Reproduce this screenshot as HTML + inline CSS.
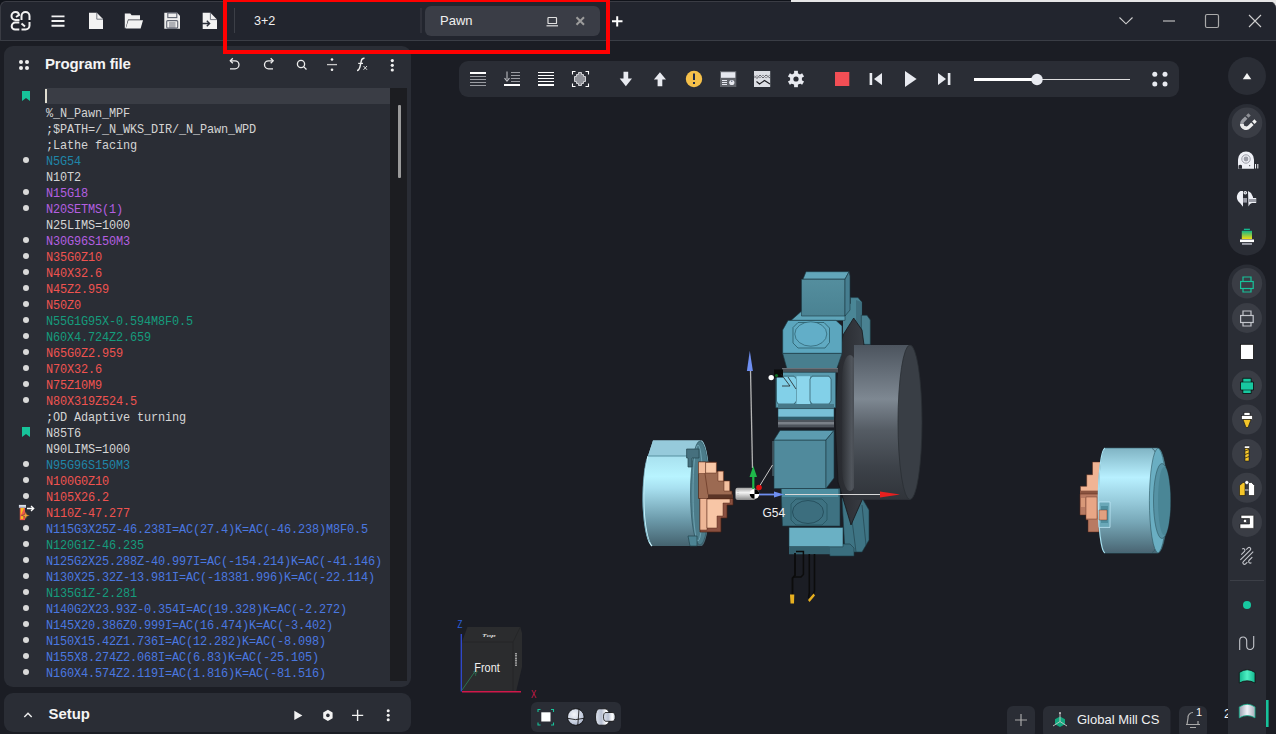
<!DOCTYPE html>
<html><head><meta charset="utf-8">
<style>
*{box-sizing:border-box;margin:0;padding:0}
html,body{width:1276px;height:734px;overflow:hidden;background:#1b1d24;font-family:"Liberation Sans",sans-serif;color:#fff}
.a{position:absolute}
#topstrip{left:0;top:0;width:1276px;height:8px;background:#10131a}
#topwhite{left:791px;top:0;width:485px;height:2px;background:#e6e6e6}
#topbar{left:0;top:1px;width:1276px;height:40px;background:#22252e;border-bottom:1px solid #3a3d45;border-top:1px solid #3a3c44;border-left:1px solid #3a3c44;border-radius:6px 7px 0 0}
.sep{width:1px;background:#3c3f47}
#panel{left:4px;top:46px;width:407px;height:641px;background:#2a2d35;border-radius:9px}
#setup{left:4px;top:693px;width:407px;height:39px;background:#2a2d35;border-radius:9px}
.code{font-family:"Liberation Mono",monospace;font-size:11.88px;letter-spacing:-0.128px;line-height:16px;white-space:pre}
.ln{position:absolute;left:46px;height:16px;transform:translateY(1.5px)}
.dot{position:absolute;left:23px;width:6px;height:6px;border-radius:50%;background:#d9d9d9}
.w{color:#d4d4d4}.b{color:#1f86a8}.p{color:#b45fe0}.r{color:#ef5350}.g{color:#159c7c}.bl{color:#4a78e0}
#vtool{left:459px;top:61px;width:720px;height:36px;background:#2a2d35;border-radius:9px}
</style></head><body>
<div class="a" id="topstrip"></div>
<div class="a" style="left:1266px;top:0;width:10px;height:10px;background:#e6e6e6"></div>
<div class="a" id="topbar"></div>
<div class="a" id="topwhite"></div>
<svg class="a" style="left:0;top:0" width="1276" height="41" viewBox="0 0 1276 41">
<g fill="none" stroke="#f2f2f2" stroke-width="2" stroke-linecap="butt">
 <!-- logo -->
 <path d="M19.5 20H15.5A4 4 0 0 1 15.5 12H15.8A3.5 3.5 0 0 1 19 15L16 17"/>
 <path d="M21.5 20V16A4 4 0 0 1 29.5 16V20"/>
 <path d="M19.3 22.6H15.3A3.6 3.6 0 0 0 11.7 26.2A3.4 3.4 0 0 0 15.1 29.6H19.3"/>
 <path d="M21.5 29.5H25.5A4 4 0 0 0 29.5 25.5V22"/>
 <path d="M21.5 23.5L25 26.5"/>
 <!-- hamburger -->
 <path d="M51.5 16.4H64.5M51.5 21H64.5M51.5 25.8H64.5" stroke-width="1.9"/>
</g>
<!-- new file -->
<path d="M89 12.8H96.8L103 19V29H89Z" fill="#f2f2f2"/>
<path d="M96.8 12.8V19.2H103" fill="none" stroke="#6a6e78" stroke-width="0.9"/>
<!-- open folder -->
<path d="M124.8 13.6H130.3L131.6 15.3H140V19.5H128L125.6 28.3H124.8Z" fill="#f2f2f2"/>
<path d="M128.4 20.2H143L140.6 28.4H125.8Z" fill="#f2f2f2"/>
<!-- save -->
<path d="M164.3 12.8H177L180 15.8V28.7H164.3Z" fill="#eeeeee"/>
<rect x="167.8" y="13" width="9" height="4.6" fill="none" stroke="#5e6370" stroke-width="1.1"/>
<rect x="166.7" y="20.6" width="11" height="7.5" rx="1" fill="#eeeeee" stroke="#5e6370" stroke-width="1.1"/>
<path d="M169 23H175.5M169 25H175.5M169 27H175.5" stroke="#5e6370" stroke-width="0.9"/>
<!-- export -->
<path d="M202.7 12.8H210.4L217 19.4V29H202.7Z" fill="#f2f2f2"/>
<path d="M210.4 12.8V19.6H217" fill="none" stroke="#6a6e78" stroke-width="0.9"/>
<path d="M202 23.5H209.5M206.8 20.8L209.6 23.5L206.8 26.2" fill="none" stroke="#2b2f3a" stroke-width="1.4"/>
<!-- separators -->
<rect x="234" y="8" width="1" height="25" fill="#3c3f47"/>
<rect x="420.5" y="8" width="1" height="25" fill="#3c3f47"/>
<!-- tab -->
<rect x="425" y="6" width="175" height="30" rx="6" fill="#3a3d46"/>
<g fill="none" stroke="#e0e0e0" stroke-width="1.2">
 <rect x="548" y="17.5" width="8.5" height="6" rx="0.6"/>
 <path d="M546.5 25.8H558"/>
</g>
<path d="M576.5 17.3L584 24.8M584 17.3L576.5 24.8" stroke="#9c9c9c" stroke-width="2"/>
<path d="M612 21.3H622.5M617.2 16.2V26.4" stroke="#ffffff" stroke-width="2"/>
<!-- window controls -->
<g fill="none" stroke="#cfcfcf" stroke-width="1.1">
 <path d="M1119.5 17.5L1126 23.8L1132.5 17.5"/>
 <path d="M1163 21H1175" stroke="#bdbdbd" stroke-width="1.2"/>
 <rect x="1205.5" y="14.5" width="13" height="13" rx="1.5" stroke="#aaaaaa" stroke-width="1.2"/>
 <path d="M1249 15L1261 27M1261 15L1249 27" stroke-width="1.1"/>
</g>
</svg>
<div class="a" style="left:254px;top:13.5px;font-size:12.6px;line-height:15px;color:#f0f0f0">3+2</div>
<div class="a" style="left:440px;top:13px;font-size:13px;line-height:15px;color:#f0f0f0">Pawn</div>


<!-- left panel -->
<div class="a" id="panel"></div>
<div class="a" id="setup"></div>
<div class="a" style="left:45px;top:88px;width:345px;height:16px;background:#3a3d45"></div>
<div class="a" style="left:45px;top:89px;width:2px;height:14px;background:#e0ddd0"></div>
<svg class="a" style="left:22px;top:91px" width="8" height="10" viewBox="0 0 8 10"><path d="M0 0H8V10L4 7L0 10Z" fill="#17c49a"/></svg>
<div class="ln code w" style="top:104px">%_N_Pawn_MPF</div>
<div class="ln code w" style="top:120px">;$PATH=/_N_WKS_DIR/_N_Pawn_WPD</div>
<div class="ln code w" style="top:136px">;Lathe facing</div>
<div class="dot" style="top:157px"></div>
<div class="ln code b" style="top:152px">N5G54</div>
<div class="ln code w" style="top:168px">N10T2</div>
<div class="dot" style="top:189px"></div>
<div class="ln code p" style="top:184px">N15G18</div>
<div class="dot" style="top:205px"></div>
<div class="ln code p" style="top:200px">N20SETMS(1)</div>
<div class="ln code w" style="top:216px">N25LIMS=1000</div>
<div class="dot" style="top:237px"></div>
<div class="ln code p" style="top:232px">N30G96S150M3</div>
<div class="dot" style="top:253px"></div>
<div class="ln code r" style="top:248px">N35G0Z10</div>
<div class="dot" style="top:269px"></div>
<div class="ln code r" style="top:264px">N40X32.6</div>
<div class="dot" style="top:285px"></div>
<div class="ln code r" style="top:280px">N45Z2.959</div>
<div class="dot" style="top:301px"></div>
<div class="ln code r" style="top:296px">N50Z0</div>
<div class="dot" style="top:317px"></div>
<div class="ln code g" style="top:312px">N55G1G95X-0.594M8F0.5</div>
<div class="dot" style="top:333px"></div>
<div class="ln code g" style="top:328px">N60X4.724Z2.659</div>
<div class="dot" style="top:349px"></div>
<div class="ln code r" style="top:344px">N65G0Z2.959</div>
<div class="dot" style="top:365px"></div>
<div class="ln code r" style="top:360px">N70X32.6</div>
<div class="dot" style="top:381px"></div>
<div class="ln code r" style="top:376px">N75Z10M9</div>
<div class="dot" style="top:397px"></div>
<div class="ln code r" style="top:392px">N80X319Z524.5</div>
<div class="ln code w" style="top:408px">;OD Adaptive turning</div>
<svg class="a" style="left:22px;top:427px" width="8" height="10" viewBox="0 0 8 10"><path d="M0 0H8V10L4 7L0 10Z" fill="#17c49a"/></svg>
<div class="ln code w" style="top:424px">N85T6</div>
<div class="ln code w" style="top:440px">N90LIMS=1000</div>
<div class="dot" style="top:461px"></div>
<div class="ln code b" style="top:456px">N95G96S150M3</div>
<div class="dot" style="top:477px"></div>
<div class="ln code r" style="top:472px">N100G0Z10</div>
<div class="dot" style="top:493px"></div>
<div class="ln code r" style="top:488px">N105X26.2</div>
<svg class="a" style="left:12px;top:500px" width="40" height="24" viewBox="12 500 40 24"><defs><linearGradient id="capg" x1="0" y1="0" x2="0" y2="1"><stop offset="0" stop-color="#e8ecf4"/><stop offset="1" stop-color="#a8b4c8"/></linearGradient><linearGradient id="starg" x1="0" y1="0" x2="1" y2="1"><stop offset="0" stop-color="#f07040"/><stop offset="1" stop-color="#f8d030"/></linearGradient></defs><rect x="18.9" y="504.9" width="7.1" height="3" fill="url(#capg)"/><rect x="19.8" y="507.9" width="5.2" height="12.2" fill="#f05a4a"/><path d="M20.8 508H24L21.5 514L20.8 515Z" fill="#f8c020"/><path d="M20.8 516.5L23 515.5V519H20.8Z" fill="#f8c020"/><path d="M25.7 511.2L26.7 514.4L29.8 515.4L26.7 516.4L25.7 519.6L24.7 516.4L21.6 515.4L24.7 514.4Z" fill="url(#starg)" stroke="#2a2d35" stroke-width="0.4"/><path d="M27 508.5H33M31 506L33.7 508.5L31 511" fill="none" stroke="#ffffff" stroke-width="1.3"/></svg>
<div class="ln code r" style="top:504px">N110Z-47.277</div>
<div class="dot" style="top:525px"></div>
<div class="ln code bl" style="top:520px">N115G3X25Z-46.238I=AC(27.4)K=AC(-46.238)M8F0.5</div>
<div class="dot" style="top:541px"></div>
<div class="ln code g" style="top:536px">N120G1Z-46.235</div>
<div class="dot" style="top:557px"></div>
<div class="ln code bl" style="top:552px">N125G2X25.288Z-40.997I=AC(-154.214)K=AC(-41.146)</div>
<div class="dot" style="top:573px"></div>
<div class="ln code bl" style="top:568px">N130X25.32Z-13.981I=AC(-18381.996)K=AC(-22.114)</div>
<div class="dot" style="top:589px"></div>
<div class="ln code g" style="top:584px">N135G1Z-2.281</div>
<div class="dot" style="top:605px"></div>
<div class="ln code bl" style="top:600px">N140G2X23.93Z-0.354I=AC(19.328)K=AC(-2.272)</div>
<div class="dot" style="top:621px"></div>
<div class="ln code bl" style="top:616px">N145X20.386Z0.999I=AC(16.474)K=AC(-3.402)</div>
<div class="dot" style="top:637px"></div>
<div class="ln code bl" style="top:632px">N150X15.42Z1.736I=AC(12.282)K=AC(-8.098)</div>
<div class="dot" style="top:653px"></div>
<div class="ln code bl" style="top:648px">N155X8.274Z2.068I=AC(6.83)K=AC(-25.105)</div>
<div class="dot" style="top:669px"></div>
<div class="ln code bl" style="top:664px">N160X4.574Z2.119I=AC(1.816)K=AC(-81.516)</div>
<svg class="a" style="left:0;top:40px" width="420" height="60" viewBox="0 40 420 60">
<g fill="#f0f0f0">
 <circle cx="21" cy="62" r="2"/><circle cx="27" cy="62" r="2"/><circle cx="21" cy="68" r="2"/><circle cx="27" cy="68" r="2"/>
 <circle cx="392.3" cy="60.6" r="1.6"/><circle cx="392.3" cy="65.3" r="1.6"/><circle cx="392.3" cy="70" r="1.6"/>
 <circle cx="332" cy="59.5" r="1.3"/><circle cx="332" cy="69.8" r="1.3"/>
</g>
<g fill="none" stroke="#eeeeee" stroke-width="1.3">
 <path d="M230.5 60.8H235A4 4 0 0 1 235 68.8H230"/>
 <path d="M232.8 58.3L230.3 60.8L232.8 63.3"/>
 <path d="M273 60.8H268.5A4 4 0 0 0 268.5 68.8H273"/>
 <path d="M270.7 58.3L273.2 60.8L270.7 63.3"/>
 <circle cx="301" cy="64" r="3.6"/>
 <path d="M303.6 66.6L306.5 69.5"/>
 <path d="M327 64.6H337" stroke="#c8c8c8"/>
</g>
<path d="M357 70.5C359 70.5 359.5 69 360.2 66L361.4 60.5C361.9 58.5 362.5 58 364.5 58.2" fill="none" stroke="#eeeeee" stroke-width="1.4"/>
<path d="M358.2 63.4H363" stroke="#eeeeee" stroke-width="1.2"/>
<path d="M363.5 66L367 69.8M367 66L363.5 69.8" stroke="#dddddd" stroke-width="1"/>
</svg>
<div class="a" style="left:45px;top:55px;font-size:15px;line-height:17px;font-weight:bold;letter-spacing:-0.15px;color:#f4f4f4">Program file</div>
<!-- scrollbar -->
<div class="a" style="left:390px;top:88px;width:17px;height:593px;background:#1c1d21"></div>
<div class="a" style="left:397.5px;top:105px;width:3px;height:73px;background:#9a9a9a;border-radius:1px"></div>
<!-- setup row -->
<svg class="a" style="left:0;top:693px" width="420" height="41" viewBox="0 693 420 41">
<path d="M24.3 717L28 713.3L31.7 717" fill="none" stroke="#eeeeee" stroke-width="1.4"/>
<path d="M294.3 710.8L302.4 715.4L294.3 720Z" fill="#f2f2f2"/>
<path d="M327.9 709.8L332.6 712.6V718.2L327.9 721L323.2 718.2V712.6Z" fill="#f2f2f2"/>
<circle cx="327.9" cy="715.4" r="1.8" fill="#2a2d35"/>
<path d="M352 715.4H363.2M357.6 709.8V721" stroke="#f2f2f2" stroke-width="1.4"/>
<g fill="#f0f0f0"><circle cx="388.2" cy="710.8" r="1.5"/><circle cx="388.2" cy="715.3" r="1.5"/><circle cx="388.2" cy="719.8" r="1.5"/></g>
</svg>
<div class="a" style="left:48.5px;top:705.5px;font-size:14.9px;line-height:17px;font-weight:bold;color:#f4f4f4">Setup</div>


<!-- viewport toolbar -->
<svg class="a" style="left:600px;top:250px" width="600" height="380" viewBox="600 250 600 380">
<defs>
 <linearGradient id="chk" x1="0" y1="0" x2="0" y2="1"><stop offset="0" stop-color="#9cd2e2"/><stop offset="0.34" stop-color="#b8f4ff"/><stop offset="0.45" stop-color="#a8e0f0"/><stop offset="0.57" stop-color="#90c4d4"/><stop offset="0.76" stop-color="#6a98a8"/><stop offset="1" stop-color="#44626e"/></linearGradient>
 <linearGradient id="chkR" x1="0" y1="0" x2="0" y2="1"><stop offset="0" stop-color="#80b4c4"/><stop offset="0.28" stop-color="#b8f0ff"/><stop offset="0.5" stop-color="#98ccdc"/><stop offset="0.7" stop-color="#78a8b8"/><stop offset="0.9" stop-color="#587c8a"/><stop offset="1" stop-color="#4a6472"/></linearGradient>
 <linearGradient id="gcyl" x1="0" y1="0" x2="1" y2="0"><stop offset="0" stop-color="#3a3f46"/><stop offset="0.55" stop-color="#8a949c"/><stop offset="1" stop-color="#5a626a"/></linearGradient>
 <linearGradient id="gcylv" x1="0" y1="0" x2="0" y2="1"><stop offset="0" stop-color="#4c545e"/><stop offset="0.35" stop-color="#7e8892"/><stop offset="0.55" stop-color="#555c64"/><stop offset="0.8" stop-color="#3c4148"/><stop offset="1" stop-color="#30343a"/></linearGradient>
 <linearGradient id="tealf" x1="0" y1="0" x2="0" y2="1"><stop offset="0" stop-color="#548e9e"/><stop offset="1" stop-color="#4a8292"/></linearGradient>
 <linearGradient id="disk" x1="0" y1="0" x2="1" y2="0"><stop offset="0" stop-color="#26282d"/><stop offset="1" stop-color="#3a3e45"/></linearGradient>
 <linearGradient id="shld" x1="0" y1="0" x2="1" y2="0"><stop offset="0" stop-color="#2e3136"/><stop offset="0.6" stop-color="#50555c"/><stop offset="1" stop-color="#3a3e44"/></linearGradient>
 <linearGradient id="wp" x1="0" y1="0" x2="0" y2="1"><stop offset="0" stop-color="#a0a0a0"/><stop offset="0.4" stop-color="#f4f4f4"/><stop offset="1" stop-color="#8a8a8a"/></linearGradient>
</defs>
<!-- ===== LEFT CHUCK ===== -->
<path d="M653 440.6H702A9 53 0 0 1 702 546H652A10 50 0 0 1 642.5 500A10 50 0 0 1 648 456Z" fill="url(#chk)"/>
<path d="M653 440.6H700V456H648Z" fill="#96cadb"/>
<path d="M648 456A10 50 0 0 0 652 546" fill="none" stroke="#c8f4ff" stroke-width="1.2"/>
<path d="M646.5 460A9 46 0 0 0 650 542" fill="none" stroke="#5f98aa" stroke-width="0.7"/>
<path d="M648 456H690" stroke="#4e8898" stroke-width="0.9"/>
<ellipse cx="700" cy="493" rx="9.5" ry="52" fill="#4c7c8a" stroke="#2e5560" stroke-width="0.7"/>
<ellipse cx="698" cy="493" rx="5" ry="48" fill="none" stroke="#7ab0c0" stroke-width="0.7"/>
<path d="M686.6 449H699V458H692V467H688V458H686.6Z" fill="#46707e" stroke="#23434c" stroke-width="0.7"/>
<path d="M688 536H697V546H690Z" fill="#4d8494" stroke="#23434c" stroke-width="0.7"/>
<!-- jaws -->
<path d="M698.5 462H716.4V471.2H723.4V481H729.7V491H732V498.5H698.5Z" fill="#9c6a52" stroke="#4a2416" stroke-width="0.7"/>
<path d="M698.5 462H705.6V473.5H698.5Z" fill="#f2bc9c" stroke="#5a2a1a" stroke-width="0.5"/>
<path d="M705.6 462.5H716.4V473H705.6Z" fill="#f8c8a8" stroke="#5a2a1a" stroke-width="0.5"/>
<path d="M718 471.2H723.4V481H718Z" fill="#f4c0a0" stroke="#5a2a1a" stroke-width="0.5"/>
<path d="M724 481H729.7V491H724Z" fill="#f4c0a0" stroke="#5a2a1a" stroke-width="0.5"/>
<path d="M705 473.5L708 494.5" stroke="#5a2a1a" stroke-width="0.6"/>
<rect x="708" y="494.4" width="25" height="4" fill="#5a3426"/>
<path d="M700 498.5H733V505H727V518H721V532H700Z" fill="#8a5040" stroke="#4a2416" stroke-width="0.7"/>
<path d="M700 498.5H707V530H700Z" fill="#eeb696" stroke="#5a2a1a" stroke-width="0.5"/>
<path d="M707 499H730V503H723V516H717V528H707Z" fill="#f8c6a6" stroke="#5a2a1a" stroke-width="0.5"/>
<!-- workpiece -->
<rect x="735.5" y="487.7" width="20" height="12.3" rx="2" fill="url(#wp)"/>
<path d="M738 489V499" stroke="#b0b0b0" stroke-width="0.6" stroke-dasharray="1 1"/>
<!-- ===== TURRET ===== -->
<!-- right stepped parts behind -->
<path d="M850.3 297.6H858L861.8 302V334H850.3Z" fill="#4a8696" stroke="#1c3a44" stroke-width="0.6"/>
<path d="M856 300V334H861.8V302Z" fill="#3e7080"/>
<path d="M861.3 315.3H867L870.3 320V344.4H861.3Z" fill="#4a8292" stroke="#1c3a44" stroke-width="0.6"/>
<path d="M843 300L853 305V335L843 345Z" fill="#4a8696"/>
<path d="M842 498H862L869 510V540L862 552H845Z" fill="#3e7484" stroke="#1c3a44" stroke-width="0.6"/>
<path d="M852 520L856 552M862 505L866 545" stroke="#1c3a44" stroke-width="0.6"/>
<path d="M828 544H850L854 548V556H830Z" fill="#3a6e7e" stroke="#1c3a44" stroke-width="0.6"/>
<!-- dark disk behind -->
<path d="M853.7 318L862 330L864 345L866 420L862 500L851 525L838 482L835 420L838 360L843 335Z" fill="url(#disk)" stroke="#15171b" stroke-width="0.8"/>
<!-- shoulder -->
<path d="M791 320.4L808 305.5H845V320.4Z" fill="#5ea4b8" stroke="#1c3a44" stroke-width="0.6"/>
<!-- top block -->
<path d="M803 279.2L806 271.7H849L845 279.2Z" fill="#62a6ba" stroke="#1c3a44" stroke-width="0.6"/>
<path d="M801.5 279.2H845V316H801.5Z" fill="url(#tealf)" stroke="#1c3a44" stroke-width="0.6"/>
<path d="M845 279.2L849 271.7L850 276V310L845 316Z" fill="#467e90" stroke="#1c3a44" stroke-width="0.6"/>
<!-- octagon screw block upper -->
<path d="M788 320.4H836L842 326V353.4H782.7V330Z" fill="#5ca6be" stroke="#1c3a44" stroke-width="0.6"/>
<path d="M798 322.5H824L829.5 328V342.5L825 348H798L793 343V327.5Z" fill="#60aac2" stroke="#23505c" stroke-width="0.7"/>
<ellipse cx="810.8" cy="334" rx="16" ry="12.2" fill="#62aec8" stroke="#23505c" stroke-width="0.6"/>
<path d="M782.7 353.4H842L836.7 369H787Z" fill="#487e8e" stroke="#1c3a44" stroke-width="0.6"/>
<!-- dark strip -->
<rect x="782" y="368" width="56" height="4.5" fill="#4c5258"/>
<rect x="782" y="368" width="56" height="1" fill="#6a7078"/>
<!-- light slot block -->
<path d="M775.8 372.3H835.7V407.8H775.8Z" fill="#5a9cb0" stroke="#1c3a44" stroke-width="0.6"/>
<path d="M776.5 376.2H794L796.5 379V401L794 404H778L776.5 401Z" fill="#82d0e8" stroke="#1c3a44" stroke-width="0.6"/>
<path d="M796.5 376.2H810V404H796.5Z" fill="#8cd6ec"/>
<path d="M812 376.2H829L831 379V401L829 404H812L810 401V379Z" fill="#82d0e8" stroke="#1c3a44" stroke-width="0.6"/>
<rect x="778" y="404" width="56" height="4.8" fill="#467888"/>
<rect x="778" y="408.8" width="56" height="8.2" fill="#78c0d6" stroke="#1c3a44" stroke-width="0.5"/>
<rect x="778" y="417" width="56" height="3" fill="#2e5e6c"/>
<rect x="778" y="419.7" width="56" height="7.7" fill="#4e545c"/>
<rect x="778" y="422" width="56" height="2.5" fill="#7a8088"/>
<!-- gray cylinder -->
<rect x="842" y="355" width="16" height="136" rx="8" ry="24" fill="url(#shld)"/>
<path d="M854 345H910V499.7H854Z" fill="url(#gcylv)"/>
<ellipse cx="910" cy="422.3" rx="12" ry="77.3" fill="#393e45" stroke="#2a2e33" stroke-width="0.8"/>
<!-- lower big block -->
<path d="M774 440H826V488.6H774Z" fill="#508a9c" stroke="#1c3a44" stroke-width="0.6"/>
<path d="M780 430.4H834L826 440H774Z" fill="#5c9cb0" stroke="#1c3a44" stroke-width="0.6"/>
<path d="M826 440L834 430.4V478L826 488.6Z" fill="#467e90" stroke="#1c3a44" stroke-width="0.6"/>
<path d="M773 441V476" stroke="#8ab8c6" stroke-width="0.6"/>
<!-- lower octagon block -->
<path d="M781 488.6H840V526H782.5Z" fill="#3e7282" stroke="#1c3a44" stroke-width="0.6"/>
<path d="M782 489H838V497H782Z" fill="#4e8ea0"/>
<path d="M796 499H822L827 504V520L822 525H796L791 520V504Z" fill="#3e7282" stroke="#23505c" stroke-width="0.7"/>
<ellipse cx="808" cy="512" rx="15.5" ry="11.5" fill="#3c6e7e" stroke="#1e4450" stroke-width="0.7"/>
<!-- bottom block -->
<path d="M789 527.4H843V546.8H789Z" fill="#6ab0c4" stroke="#1c3a44" stroke-width="0.6"/>
<!-- tools -->
<path d="M789 546.8H830V554.3H789Z" fill="#34606e"/>
<path d="M795 553V575.5L792.5 578V596" fill="none" stroke="#0c0c0c" stroke-width="1.8"/>
<path d="M796 551.5H803.4V574.5L801 577H794" fill="none" stroke="#0c0c0c" stroke-width="1.5"/>
<path d="M809.3 554V593L808.5 598" fill="none" stroke="#0c0c0c" stroke-width="1.6"/>
<path d="M814.5 554V591L812 597" fill="none" stroke="#0c0c0c" stroke-width="1.6"/>
<path d="M790 594.5H794.3L794 603.5H790.5Z" fill="#e8b020"/>
<path d="M808 600L813.5 593.5L815 595.5L809.5 602Z" fill="#e8b020"/>
<!-- red axis line -->
<path d="M785 494.5H882" stroke="#d8d8d8" stroke-width="1.1"/>
<path d="M880 491.5L900 494.5L880 497.5Z" fill="#e82020"/>
<!-- tool marker near top -->
<rect x="774" y="369.5" width="9" height="8" fill="#0a0a0a"/>
<path d="M781 374L790 386M788 377L796 389M782 386H790" stroke="#222" stroke-width="0.8"/>
<circle cx="776.5" cy="375.5" r="1.6" fill="#0a6a20"/>
<circle cx="771.2" cy="377.6" r="2.7" fill="#ffffff"/>
<!-- axes gizmo -->
<path d="M750.5 370L752.5 468" stroke="#b4b4b4" stroke-width="1.3"/>
<path d="M746.9 371L749.8 350.8L752.9 371Z" fill="#6e8ef0"/>
<path d="M753.3 489V474" stroke="#1fb84a" stroke-width="2.2"/>
<path d="M749.5 477L753.3 466L757 477Z" fill="#1fb84a"/>
<path d="M758 494.5H776" stroke="#6e8ef0" stroke-width="1.8"/>
<path d="M774 491.5L784 494.5L774 497.5Z" fill="#6e8ef0"/>
<path d="M759 487L772.5 465" stroke="#c8c8c8" stroke-width="1"/>
<circle cx="754.5" cy="494" r="4.8" fill="#ffffff"/>
<path d="M754.5 494V489.2A4.8 4.8 0 0 1 759.3 494ZM754.5 494H749.7A4.8 4.8 0 0 0 754.5 498.8Z" fill="#000"/>
<circle cx="759" cy="487.5" r="2.8" fill="#e01010"/>
<text x="762.5" y="516.5" font-family="Liberation Sans" font-size="12" fill="#f0f0f0">G54</text>
<!-- ===== RIGHT CHUCK ===== -->
<path d="M1092.5 462H1103V491H1080.4V486.3H1086.7V474.7H1092.5Z" fill="#f0b494" stroke="#5a2a1a" stroke-width="0.5"/>
<rect x="1080" y="491" width="23" height="3" fill="#8a5440"/>
<path d="M1080 494H1103V520H1099V532H1088V520H1086V515H1080Z" fill="#b87a62" stroke="#5a2a1a" stroke-width="0.5"/>
<rect x="1086" y="497" width="11" height="22" fill="#e8a686" stroke="#5a2a1a" stroke-width="0.4"/>
<rect x="1081" y="498" width="4" height="9" fill="#d89878"/>
<path d="M1105 448.1H1158A10 52.5 0 0 1 1158 553H1105A7 52.5 0 0 1 1105 448.1Z" fill="url(#chkR)" stroke="#3e6e7c" stroke-width="0.6"/>
<path d="M1105 448.1A7 52.5 0 0 0 1105 553" fill="none" stroke="#a8e0f0" stroke-width="1.2"/>
<path d="M1152 448.5A9 52 0 0 1 1152 552.5" fill="none" stroke="#2e5560" stroke-width="0.7"/>
<path d="M1158 448.1A9 52.5 0 0 1 1158 553A9 52.5 0 0 1 1158 448.1Z" fill="#6aaec2" stroke="#2e5560" stroke-width="0.6"/>
<ellipse cx="1162" cy="501" rx="8.5" ry="37.5" fill="#5592a4" stroke="#2e5560" stroke-width="0.6"/>
<ellipse cx="1164" cy="501" rx="6" ry="34" fill="#4a8696"/>
<path d="M1099 502H1110V527.4H1099Z" fill="#6aa8b8" stroke="#c8f0ff" stroke-width="0.7"/>
<path d="M1101 506H1108V523H1101Z" fill="#4f8e9e"/>
<path d="M1099 510H1107V520H1099Z" fill="#e0a080" stroke="#5a2a1a" stroke-width="0.4"/>
</svg>

<div class="a" id="vtool"></div>
<svg class="a" style="left:459px;top:61px" width="720" height="36" viewBox="459 61 720 36">
<!-- icon1 -->
<rect x="470" y="72" width="16" height="2" fill="#ffffff"/>
<g fill="#9a9ca2"><rect x="470" y="76" width="16" height="1"/><rect x="470" y="79" width="16" height="1"/><rect x="470" y="82" width="16" height="1"/><rect x="470" y="85" width="16" height="1"/></g>
<!-- icon2 -->
<path d="M507 71.6V79" stroke="#9a9ca2" stroke-width="1.4"/>
<path d="M504.5 78.2L507 81L509.5 78.2" fill="none" stroke="#b8b9be" stroke-width="1.2"/>
<g fill="#9a9ca2"><rect x="511" y="72" width="9" height="1"/><rect x="511" y="75" width="9" height="1"/><rect x="511" y="78" width="9" height="1"/><rect x="511" y="81" width="9" height="1"/></g>
<rect x="504" y="84" width="16" height="2" fill="#ffffff"/>
<!-- icon3 -->
<g fill="#ffffff"><rect x="538" y="72" width="16" height="1"/><rect x="538" y="75" width="16" height="1"/><rect x="538" y="78" width="16" height="1"/><rect x="538" y="81" width="16" height="1"/><rect x="538" y="84" width="16" height="2"/></g>
<!-- icon4 -->
<path d="M572.5 74.5V71.5H575.5M585.5 71.5H588.5V74.5M588.5 83.5V86.5H585.5M575.5 86.5H572.5V83.5" fill="none" stroke="#ffffff" stroke-width="1.1"/>
<path d="M578.5 72.5H581.5V74.5H583.5V76.5H585.5V81.5H583.5V83.5H581.5V85.5H578.5V83.5H576.5V81.5H574.5V76.5H576.5V74.5H578.5Z" fill="#8e9097" stroke="#d0d1d5" stroke-width="1"/>
<!-- down / up arrows -->
<path d="M623.5 71.7H628.2V78.5H632L625.85 86.3L619.7 78.5H623.5Z" fill="#e8eaf0"/>
<path d="M657.6 86.3H662.3V79.5H666L659.95 72.2L653.9 79.5H657.6Z" fill="#e8eaf0"/>
<!-- warning -->
<circle cx="694" cy="79" r="8.2" fill="#f5c04a"/>
<rect x="693" y="73.5" width="2" height="6.5" fill="#1f2a4a"/><rect x="693" y="82" width="2" height="2" fill="#1f2a4a"/>
<!-- panel icon -->
<rect x="720" y="71" width="16.3" height="16" fill="#5f6269"/>
<rect x="721" y="72.2" width="14.3" height="5.6" fill="#e6e8ef"/>
<g fill="#e6e8ef"><rect x="722" y="80" width="5" height="1"/><rect x="722" y="82" width="5" height="1"/><rect x="722" y="84" width="5" height="1"/></g>
<circle cx="731.8" cy="82.5" r="2.6" fill="#e6e8ef"/><circle cx="731.8" cy="81.2" r="0.6" fill="#2a3350"/>
<!-- chart icon -->
<rect x="754" y="71" width="16.2" height="16" fill="#dcdee4"/>
<path d="M754 75.5L757 78.5L760 75L763 78L766 75L770 78" fill="none" stroke="#55575e" stroke-width="0.9"/>
<path d="M754 78L757 75.5L760 78L763 75L766 78L770 75" fill="none" stroke="#808288" stroke-width="0.8"/>
<path d="M756.5 81.5L759.5 84L764.5 80.5L770 84" fill="none" stroke="#1a1b20" stroke-width="1.1"/>
<!-- gear -->
<g transform="translate(796 79)" fill="#e8eaf0">
 <circle r="6"/>
 <g id="t"><rect x="-1.9" y="-8.2" width="3.8" height="4"/></g>
 <use href="#t" transform="rotate(60)"/><use href="#t" transform="rotate(120)"/><use href="#t" transform="rotate(180)"/><use href="#t" transform="rotate(240)"/><use href="#t" transform="rotate(300)"/>
</g>
<circle cx="796" cy="79" r="2.6" fill="#2a2d35"/>
<!-- stop -->
<rect x="835" y="72" width="14.3" height="14" fill="#f24e55"/>
<!-- prev -->
<rect x="869.6" y="73" width="2.6" height="12" fill="#e8eaf0"/>
<path d="M882 73V85L874 79Z" fill="#e8eaf0"/>
<!-- play -->
<path d="M905 70.9V87.1L916.6 79Z" fill="#e8eaf0"/>
<!-- next -->
<path d="M938 73V85L946 79Z" fill="#e8eaf0"/>
<rect x="947.8" y="73" width="2.6" height="12" fill="#e8eaf0"/>
<!-- slider -->
<rect x="974" y="78" width="63" height="3" fill="#ffffff"/>
<rect x="1037" y="79" width="93" height="1" fill="#dedede"/>
<circle cx="1037" cy="79.5" r="5.7" fill="#e8eaf0"/>
<g fill="#e8eaf0"><circle cx="1154.8" cy="74.2" r="2.5"/><circle cx="1165" cy="74.2" r="2.5"/><circle cx="1154.8" cy="84" r="2.5"/><circle cx="1165" cy="84" r="2.5"/></g>
</svg>

<svg class="a" style="left:1216px;top:50px" width="60" height="684" viewBox="1216 50 60 684">
<defs>
 <linearGradient id="ramp" x1="0" y1="0" x2="0" y2="1"><stop offset="0" stop-color="#10b58a"/><stop offset="1" stop-color="#f2dc10"/></linearGradient>
 <linearGradient id="grn" x1="0" y1="0" x2="1" y2="0"><stop offset="0" stop-color="#12b88f"/><stop offset="0.5" stop-color="#4ff0c4"/><stop offset="1" stop-color="#12b88f"/></linearGradient>
 <linearGradient id="wht" x1="0" y1="0" x2="1" y2="0"><stop offset="0" stop-color="#9aa0b0"/><stop offset="0.5" stop-color="#f0f2f8"/><stop offset="1" stop-color="#a8aebb"/></linearGradient>
</defs>
<!-- top circle -->
<circle cx="1247" cy="76" r="19" fill="#2a2d35"/>
<path d="M1242.8 79.2L1247 73.1L1251.3 79.2Z" fill="#f4f4f4"/>
<!-- pill 1 -->
<rect x="1228" y="104" width="38" height="151.5" rx="19" fill="#2a2d35"/>
<circle cx="1247" cy="122.7" r="15.3" fill="#3a3d45"/>
<!-- magnet -->
<g transform="translate(1246.5 123.5) rotate(45)">
 <path d="M4.3 -4V0.5A4.3 4.3 0 0 1 -3 3.6" fill="none" stroke="#f0f0f0" stroke-width="3.4"/>
 <path d="M-4.3 -4V0.5A4.3 4.3 0 0 0 -3 3.6" fill="none" stroke="#9a9ca2" stroke-width="3.4"/>
 <path d="M-3 3.6A4.3 4.3 0 0 0 3 3.6" fill="none" stroke="#e8e8e8" stroke-width="3.4"/>
 <rect x="-6" y="-8.6" width="3.4" height="3.2" fill="#8d8f95"/>
 <rect x="2.6" y="-8.6" width="3.4" height="3.2" fill="#f2f2f2"/>
</g>
<!-- measure tape -->
<path d="M1238 168.8V159.5A8 8 0 0 1 1254 159.5V168.8Z" fill="#eef0f6"/>
<circle cx="1246" cy="159" r="4.2" fill="none" stroke="#9a9ca6" stroke-width="1"/>
<circle cx="1246" cy="159" r="2.4" fill="#9a9ca6"/>
<path d="M1238.5 168.8V165.5A2.5 2.5 0 0 1 1242 165.5V168.8Z" fill="#2a2d35"/>
<rect x="1249" y="165" width="1.2" height="1.2" fill="#6a6c72"/>
<rect x="1255" y="164" width="1" height="4.5" fill="#eef0f6"/><rect x="1257.3" y="164" width="1" height="4.5" fill="#eef0f6"/>
<!-- caliper -->
<path d="M1240.5 191L1243 191V206.7L1240 203A7 7 0 0 1 1240.5 191Z" fill="#eef0f6"/>
<circle cx="1245.3" cy="192.7" r="1.8" fill="#eef0f6"/><circle cx="1245.3" cy="192.7" r="0.7" fill="#6a6c72"/>
<rect x="1243.2" y="198" width="3.8" height="4.6" fill="#9a9ca6"/>
<path d="M1248 191L1251 193L1253 197V198H1256.2V203H1252L1250 204L1248.5 206.5Z" fill="#eef0f6"/>
<rect x="1249" y="199" width="7" height="3" fill="#9a9ca6"/>
<!-- color ramp -->
<rect x="1243.9" y="228.7" width="6" height="1.4" fill="#14b890"/>
<rect x="1241.8" y="230.8" width="10.2" height="8.2" fill="url(#ramp)"/>
<rect x="1240" y="239.5" width="14" height="2.6" fill="#ffffff"/>
<rect x="1242" y="243" width="10" height="1.9" fill="#9a9ca6"/>
<!-- pill 2 -->
<rect x="1228" y="264.5" width="38" height="500" rx="19" fill="#2a2d35"/>
<rect x="1230" y="580" width="34" height="1" fill="#3c3f47"/>
<g fill="#3a3d45">
 <circle cx="1247" cy="283.3" r="15.2"/>
 <circle cx="1247" cy="318" r="15"/>
 <circle cx="1247" cy="385.3" r="15"/>
 <circle cx="1247" cy="419.6" r="15"/>
 <circle cx="1247" cy="453.9" r="15"/>
 <circle cx="1247" cy="487.8" r="15"/>
 <circle cx="1247" cy="522" r="15"/>
</g>
<!-- printer teal outline -->
<g fill="none" stroke="#17c29a" stroke-width="1.2">
 <path d="M1243 281.5V277H1251V281.5"/>
 <rect x="1240.6" y="281.5" width="12.6" height="7"/>
 <path d="M1243 288.5V292H1251V288.5"/>
</g>
<!-- printer gray outline -->
<g fill="none" stroke="#c4c6cc" stroke-width="1.2">
 <path d="M1243 315.5V311H1251V315.5"/>
 <rect x="1240.6" y="315.5" width="12.6" height="7"/>
 <path d="M1243 322.5V326H1251V322.5"/>
</g>
<!-- white square -->
<rect x="1240.5" y="344.3" width="13" height="15.2" fill="#ffffff" stroke="#111" stroke-width="0.8"/>
<!-- printer teal filled -->
<path d="M1242.8 378.3H1251.2V382H1253.5V390H1251.2V393.5H1242.8V390H1240.5V382H1242.8Z" fill="#17c8a0" stroke="#0a0a0a" stroke-width="0.8"/>
<path d="M1242.8 382H1251.2M1242.8 390H1251.2" stroke="#0a0a0a" stroke-width="0.6"/>
<!-- cone tool -->
<rect x="1244" y="412.5" width="6" height="3" fill="#ffffff" stroke="#111" stroke-width="0.6"/>
<rect x="1241.5" y="415.5" width="11" height="4" fill="#ffffff" stroke="#111" stroke-width="0.6"/>
<path d="M1243 419.5H1251L1248 427.5H1246Z" fill="#f5c62a" stroke="#111" stroke-width="0.6"/>
<!-- drill -->
<rect x="1244.3" y="446" width="5.4" height="2.4" fill="#ffffff" stroke="#111" stroke-width="0.5"/>
<rect x="1245" y="448.4" width="4" height="12.6" fill="#f5c62a" stroke="#111" stroke-width="0.5"/>
<path d="M1245 451L1249 449.5M1245 454.5L1249 453M1245 458L1249 456.5" stroke="#111" stroke-width="0.7"/>
<!-- yellow-white caliper -->
<path d="M1239.5 495.5V485.5L1243 482.5H1245V495.5Z" fill="#f5c62a" stroke="#111" stroke-width="0.6"/>
<path d="M1248.5 482.5H1251.5L1254.5 485.5V495.5H1248.5Z" fill="#ffffff" stroke="#111" stroke-width="0.6"/>
<circle cx="1246.8" cy="482.5" r="2" fill="#ffffff" stroke="#111" stroke-width="0.5"/>
<path d="M1245 490H1248.5" stroke="#ffffff" stroke-width="0.8"/>
<!-- machine e -->
<path d="M1241 515.3H1253.8V528.4H1240V524H1249.5V518.5H1241Z" fill="#ffffff" stroke="#111" stroke-width="0.6"/>
<rect x="1243.5" y="519.5" width="3" height="3" fill="#ffffff" stroke="#111" stroke-width="0.5"/>
<!-- hatching -->
<g transform="translate(1246.8 555.8) rotate(-45)" fill="none" stroke="#c4c6cc" stroke-width="1.1">
<path d="M-3 -4.8H1.5A1.6 1.6 0 0 0 1.5 -8"/>
<path d="M-7.5 -1.6H6.5A1.6 1.6 0 0 0 6.5 -4.8H4"/>
<path d="M-6.5 1.6H7.5M-6.5 1.6A1.6 1.6 0 0 0 -6.5 4.8H-4"/>
<path d="M-1.5 4.8H3M-1.5 4.8A1.6 1.6 0 0 0 -1.5 8"/>
</g>
<!-- lower -->
<circle cx="1247" cy="605" r="4" fill="#17c8a0"/>
<path d="M1239.7 650V640.5A3.5 3.5 0 0 1 1246.7 640.5V646A3.5 3.5 0 0 0 1253.7 646V636" fill="none" stroke="#c4c6cc" stroke-width="1.1"/>
<path d="M1239.3 672.5Q1247.2 667 1255 672.5V683Q1247.2 678.5 1239.3 683Z" fill="url(#grn)" stroke="#0a0a0a" stroke-width="0.7"/>
<path d="M1239.3 707Q1247.2 701.5 1255 707V717.8Q1247.2 713.3 1239.3 717.8Z" fill="url(#wht)" stroke="#17b890" stroke-width="0.8"/>
<rect x="1266" y="700" width="2.6" height="27" fill="#17c29a"/>
</svg>

<svg class="a" style="left:440px;top:600px" width="790" height="134" viewBox="440 600 790 134">
<defs>
 <radialGradient id="sph" cx="0.4" cy="0.35" r="0.75"><stop offset="0" stop-color="#f4f6fa"/><stop offset="0.6" stop-color="#c8d0e0"/><stop offset="1" stop-color="#9aa4bc"/></radialGradient>
 <linearGradient id="cyl" x1="0" y1="0" x2="1" y2="0"><stop offset="0" stop-color="#dfe4ee"/><stop offset="0.4" stop-color="#b8c0d2"/><stop offset="0.75" stop-color="#ffffff"/><stop offset="1" stop-color="#c8d0de"/></linearGradient>
</defs>
<!-- view cube -->
<path d="M467.4 627H520.3L522 633V667L516 692H462V642Z" fill="#2b2c2e"/>
<path d="M462 642H513L520.3 627" fill="none" stroke="#232426" stroke-width="0.8"/>
<path d="M513 642V692" stroke="#242527" stroke-width="0.8"/>
<path d="M461.3 634V691.5" stroke="#3048c8" stroke-width="1.4"/>
<path d="M462 691.8H521" stroke="#d0184a" stroke-width="1.4"/>
<path d="M462 690L476 670" stroke="#2a7050" stroke-width="1"/>
<text x="457.5" y="628.5" font-family="Liberation Sans" font-size="10" fill="#2a60e0" transform="translate(457.5 628.5) scale(0.8 1) translate(-457.5 -628.5)">Z</text>
<text x="531" y="698.5" font-family="Liberation Sans" font-size="10" fill="#d0184a" transform="translate(531 698.5) scale(0.8 1) translate(-531 -698.5)">X</text>
<text x="473" y="676" font-family="Liberation Sans" font-size="8" fill="#2a7050">Y</text>
<text x="474.3" y="672.1" font-family="Liberation Sans" font-size="13.3" fill="#f0f0f0" transform="translate(474.3 672.1) scale(0.82 1) translate(-474.3 -672.1)">Front</text>
<text x="482" y="637.5" font-family="Liberation Sans" font-size="7" font-style="italic" font-weight="bold" fill="#d8d8d8" transform="translate(482 637.5) scale(1.1 0.6) translate(-482 -637.5)">Top</text>
<path d="M516 653V666" stroke="#b8b8b8" stroke-width="1.6" stroke-dasharray="1.2 0.5"/>
<!-- viewport bottom toolbar -->
<rect x="531" y="702" width="90" height="30" rx="6" fill="#2a2d35"/>
<path d="M538 712V709.5H540.5M551 709.5H553.5V712M553.5 722.5V725H551M540.5 725H538V722.5" fill="none" stroke="#17c29a" stroke-width="1.1"/>
<rect x="541.3" y="712.3" width="9.2" height="9.2" fill="#ffffff"/>
<circle cx="575.8" cy="717" r="8.3" fill="url(#sph)" stroke="#0a0a0a" stroke-width="0.8"/>
<path d="M567.7 718.3Q575 721 583.9 718.3M579 708.8Q578.5 717 577.8 725" fill="none" stroke="#0a0a0a" stroke-width="0.8"/>
<path d="M599 708.8H605A5 8.2 0 0 1 605 725.2H599A3.5 8.2 0 0 1 599 708.8Z" fill="url(#cyl)" stroke="#0a0a0a" stroke-width="0.8"/>
<path d="M606 712.5H612A3.2 4.4 0 0 1 612 721.3H606A2.5 4.4 0 0 1 606 712.5Z" fill="url(#cyl)" stroke="#0a0a0a" stroke-width="0.8"/>
<!-- bottom right buttons -->
<rect x="1007" y="706" width="28" height="32" rx="6" fill="#2a2d35"/>
<path d="M1015 720H1027M1021 714V726" stroke="#a8a8a8" stroke-width="1.2"/>
<rect x="1043" y="706" width="127.5" height="32" rx="6" fill="#2a2d35"/>
<path d="M1060 716.5L1055 719.3V724.3L1060 727L1065 724.3V719.3Z" fill="#12a87e"/>
<path d="M1060 713V721.5L1053 726M1060 721.5L1067 726" fill="none" stroke="#c8c8c8" stroke-width="0.9"/>
<circle cx="1060" cy="713" r="1" fill="#c8c8c8"/>
<rect x="1179" y="706" width="28" height="32" rx="6" fill="#2a2d35"/>
<path d="M1187 724.5L1188 718A5 5 0 0 1 1193 712.5M1198 721V724.5M1186 724.5H1200M1190 727.5H1196" fill="none" stroke="#a8a8a8" stroke-width="1.2"/>
</svg>
<div class="a" style="left:1077px;top:712px;font-size:13px;line-height:15px;color:#f0f0f0">Global Mill CS</div>
<div class="a" style="left:1196px;top:706px;font-size:11px;line-height:13px;color:#f4f4f4">1</div>
<div class="a" style="left:1224px;top:707px;font-size:12.5px;line-height:14px;color:#f4f4f4;width:4px;overflow:hidden">2</div>


<!-- red highlight box -->
<div class="a" style="left:223px;top:-2px;width:387px;height:56px;border:4px solid #ff0000"></div>
</body></html>
